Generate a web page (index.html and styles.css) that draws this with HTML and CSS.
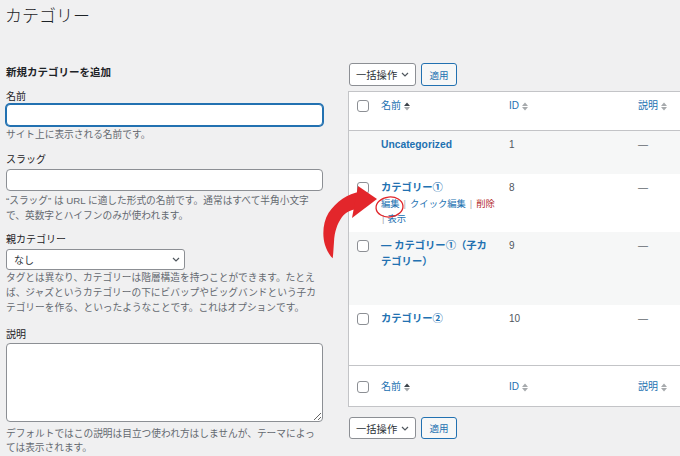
FILE: index.html
```html
<!DOCTYPE html>
<html lang="ja">
<head>
<meta charset="utf-8">
<title>カテゴリー</title>
<link rel="stylesheet" href="styles.css">
</head>
<body>
<div class="page">
  <h1 class="title">カテゴリー</h1>
  <div class="cols">
    <div class="col-left">
      <h2 class="form-title">新規カテゴリーを追加</h2>
      <div class="field f-name">
        <label class="label">名前</label>
        <input class="text-input is-focus" type="text">
        <p class="desc">サイト上に表示される名前です。</p>
      </div>
      <div class="field f-slug">
        <label class="label">スラッグ</label>
        <input class="text-input" type="text">
        <p class="desc">“スラッグ” は URL に適した形式の名前です。通常はすべて半角小文字で、英数字とハイフンのみが使われます。</p>
      </div>
      <div class="field f-parent">
        <label class="label">親カテゴリー</label>
        <div class="select select-parent">
          <span>なし</span>
          <svg class="chev" width="8" height="5" viewBox="0 0 8 5"><path d="M1 1l3 3 3-3" fill="none" stroke="#50575e" stroke-width="1.2"/></svg>
        </div>
        <p class="desc">タグとは異なり、カテゴリーは階層構造を持つことができます。たとえば、ジャズというカテゴリーの下にビバップやビッグバンドという子カテゴリーを作る、といったようなことです。これはオプションです。</p>
      </div>
      <div class="field f-desc">
        <label class="label">説明</label>
        <textarea class="textarea"></textarea>
        <p class="desc desc-tight">デフォルトではこの説明は目立つ使われ方はしませんが、テーマによっては表示されます。</p>
      </div>
    </div>

    <div class="col-right">
      <div class="bulk">
        <div class="select select-bulk">
          <span>一括操作</span>
          <svg class="chev" width="8" height="5" viewBox="0 0 8 5"><path d="M1 1l3 3 3-3" fill="none" stroke="#50575e" stroke-width="1.2"/></svg>
        </div>
        <button class="btn">適用</button>
      </div>

      <div class="table">
        <div class="trow thead">
          <div class="c-check"><span class="cb"></span></div>
          <div class="c-name"><span class="sort">名前 <svg width="6" height="9" viewBox="0 0 6 9"><path d="M0 4L3 0.5 6 4Z" fill="#3c434a"/><path d="M0 5L3 8.5 6 5Z" fill="#a7aaad"/></svg></span></div>
          <div class="c-id"><span class="sort">ID <svg width="6" height="9" viewBox="0 0 6 9"><path d="M0 4L3 0.5 6 4Z" fill="#a7aaad"/><path d="M0 5L3 8.5 6 5Z" fill="#a7aaad"/></svg></span></div>
          <div class="c-desc"><span class="sort">説明 <svg width="6" height="9" viewBox="0 0 6 9"><path d="M0 4L3 0.5 6 4Z" fill="#a7aaad"/><path d="M0 5L3 8.5 6 5Z" fill="#a7aaad"/></svg></span></div>
        </div>

        <div class="trow tbody alt r1">
          <div class="c-check"></div>
          <div class="c-name"><a class="row-title">Uncategorized</a></div>
          <div class="c-id">1</div>
          <div class="c-desc dash">—</div>
        </div>

        <div class="trow tbody r2">
          <div class="c-check"><span class="cb"></span></div>
          <div class="c-name">
            <a class="row-title">カテゴリー①</a>
            <div class="actions">
              <div class="act-line"><a>編集</a><span class="sep">|</span><a>クイック編集</a><span class="sep">|</span><a class="del">削除</a></div>
              <div class="act-line"><span class="sep sep-first">|</span><a>表示</a></div>
            </div>
          </div>
          <div class="c-id">8</div>
          <div class="c-desc dash">—</div>
        </div>

        <div class="trow tbody alt r3">
          <div class="c-check"><span class="cb"></span></div>
          <div class="c-name"><a class="row-title">— カテゴリー①（子カテゴリー）</a></div>
          <div class="c-id">9</div>
          <div class="c-desc dash">—</div>
        </div>

        <div class="trow tbody r4">
          <div class="c-check"><span class="cb"></span></div>
          <div class="c-name"><a class="row-title">カテゴリー②</a></div>
          <div class="c-id">10</div>
          <div class="c-desc dash">—</div>
        </div>

        <div class="trow tfoot">
          <div class="c-check"><span class="cb"></span></div>
          <div class="c-name"><span class="sort">名前 <svg width="6" height="9" viewBox="0 0 6 9"><path d="M0 4L3 0.5 6 4Z" fill="#3c434a"/><path d="M0 5L3 8.5 6 5Z" fill="#a7aaad"/></svg></span></div>
          <div class="c-id"><span class="sort">ID <svg width="6" height="9" viewBox="0 0 6 9"><path d="M0 4L3 0.5 6 4Z" fill="#a7aaad"/><path d="M0 5L3 8.5 6 5Z" fill="#a7aaad"/></svg></span></div>
          <div class="c-desc"><span class="sort">説明 <svg width="6" height="9" viewBox="0 0 6 9"><path d="M0 4L3 0.5 6 4Z" fill="#a7aaad"/><path d="M0 5L3 8.5 6 5Z" fill="#a7aaad"/></svg></span></div>
        </div>
      </div>

      <div class="bulk bulk-bottom">
        <div class="select select-bulk">
          <span>一括操作</span>
          <svg class="chev" width="8" height="5" viewBox="0 0 8 5"><path d="M1 1l3 3 3-3" fill="none" stroke="#50575e" stroke-width="1.2"/></svg>
        </div>
        <button class="btn">適用</button>
      </div>
    </div>
  </div>

  <svg class="annot" width="100" height="90" viewBox="0 0 100 90">
    <path d="M50 12 C38 13 26 22 18.5 33 C13 42 12 55 15 65 C17 71 20 76 22.7 78.3 C23.5 72 23.5 68 24 62 C24.5 52 27 44 32 37 C36 32 41 30 46 29 Z" fill="#e3262b"/>
    <path d="M48 6 L67 19 L42 38 Z" fill="#e3262b"/>
    <ellipse cx="79.5" cy="27" rx="13.5" ry="10" fill="none" stroke="#e0262b" stroke-width="1.3" transform="rotate(-6 79.5 27)"/>
  </svg>
</div>
</body>
</html>
```

FILE: styles.css
```css
html, body {
  margin: 0;
  height: 456px;
  overflow: hidden;
}

body {
  background: #f0f0f1;
  font-family: "Liberation Sans", "Noto Sans CJK JP", sans-serif;
  font-size: 10px;
  color: #3c434a;
}

.page {
  position: relative;
  padding-left: 5px;
}

.title {
  margin: 0;
  padding-top: 6px;
  font-size: 17px;
  line-height: 22px;
  font-weight: 300;
  color: #1d2327;
}

.cols {
  display: flex;
  gap: 25px;
  margin-top: 35px;
}

/* ---------- left form ---------- */
.col-left {
  width: 317px;
  margin-left: 1px;
  flex: none;
  display: flex;
  flex-direction: column;
}

.form-title {
  margin: 2px 0 0;
  font-size: 10.5px;
  line-height: 15px;
  font-weight: 700;
  color: #1d2327;
}

.field {
  display: flex;
  flex-direction: column;
}

.f-name { margin-top: 10px; }
.f-slug { margin-top: 11px; }
.f-parent { margin-top: 10px; }
.f-desc { margin-top: 13px; }

.label {
  line-height: 14px;
  color: #1d2327;
}

.text-input {
  box-sizing: border-box;
  width: 317px;
  height: 22px;
  margin: 0;
  border: 1px solid #8c8f94;
  border-radius: 4px;
  background: #fff;
  outline: none;
}

.f-slug .text-input { margin-top: 2px; }

.is-focus {
  border-color: #2271b1;
  box-shadow: 0 0 0 1px #2271b1;
}

.desc {
  margin: 1px 0 0;
  font-size: 9.7px;
  line-height: 15px;
  color: #646970;
}

.f-slug .desc { margin-top: 2px; }
.f-parent .desc { margin-top: 0; }

.desc-tight {
  margin-top: 5px;
  line-height: 14px;
}

.select {
  box-sizing: border-box;
  display: flex;
  align-items: center;
  justify-content: space-between;
  border: 1px solid #8c8f94;
  border-radius: 3px;
  background: #fff;
  color: #2c3338;
}

.select-parent {
  width: 179px;
  height: 21px;
  margin-top: 2px;
  padding: 0 4px 0 7px;
}

.textarea {
  box-sizing: border-box;
  width: 317px;
  height: 79px;
  margin: 1px 0 0;
  border: 1px solid #8c8f94;
  border-radius: 4px;
  background: #fff;
  resize: vertical;
  outline: none;
}

/* ---------- right list ---------- */
.col-right {
  width: 345px;
  flex: none;
}

.bulk {
  display: flex;
  gap: 5px;
  margin-left: 1px;
  height: 23px;
}

.bulk-bottom {
  margin-top: 10px;
  height: 22px;
}

.select-bulk {
  width: 67px;
  padding: 0 6px;
  font-size: 10.3px;
}

.btn {
  box-sizing: border-box;
  width: 36px;
  padding: 0;
  border: 1px solid #2271b1;
  border-radius: 3px;
  background: #f6f7f7;
  color: #2271b1;
  font-family: inherit;
  font-size: 9.5px;
}

.table {
  margin-top: 5px;
  border: 1px solid #c3c4c7;
  background: #fff;
}

.trow {
  box-sizing: border-box;
  display: grid;
  grid-template-columns: 32px 128px 129px 1fr;
  align-items: start;
}

.thead {
  height: 39px;
  padding-top: 7px;
  border-bottom: 1px solid #c3c4c7;
}

.tfoot {
  height: 41px;
  padding-top: 14px;
  border-top: 1px solid #c3c4c7;
}

.tbody {
  padding-top: 6px;
  line-height: 16px;
}

.alt { background: #f6f7f7; }
.r1 { height: 43px; }
.r2 { height: 58px; }
.r3 { height: 73px; }
.r4 { height: 60px; }

.c-check {
  padding-left: 8px;
}

.cb {
  display: block;
  box-sizing: border-box;
  width: 12px;
  height: 12px;
  border: 1px solid #8c8f94;
  border-radius: 3px;
  background: #fff;
}

.thead .cb, .tfoot .cb { margin-top: 1px; }
.tbody .cb { margin-top: 2px; }

.c-name {
  padding-right: 18px;
}

.sort {
  display: inline-flex;
  align-items: center;
  gap: 3px;
  line-height: 14px;
  color: #2271b1;
}

.row-title {
  font-size: 10.3px;
  font-weight: 700;
  color: #2271b1;
}

.actions {
  margin-top: 1px;
  font-size: 9.3px;
  line-height: 15px;
}

.act-line {
  white-space: nowrap;
}

.actions a { color: #2271b1; }
.actions .del { color: #b32d2e; }

.sep {
  margin: 0 4px;
  color: #a7aaad;
}

.sep-first {
  margin: 0 3px 0 1px;
}

.c-id {
  color: #50575e;
}

.dash {
  color: #646970;
}

.annot {
  position: absolute;
  left: 310px;
  top: 180px;
}
```
